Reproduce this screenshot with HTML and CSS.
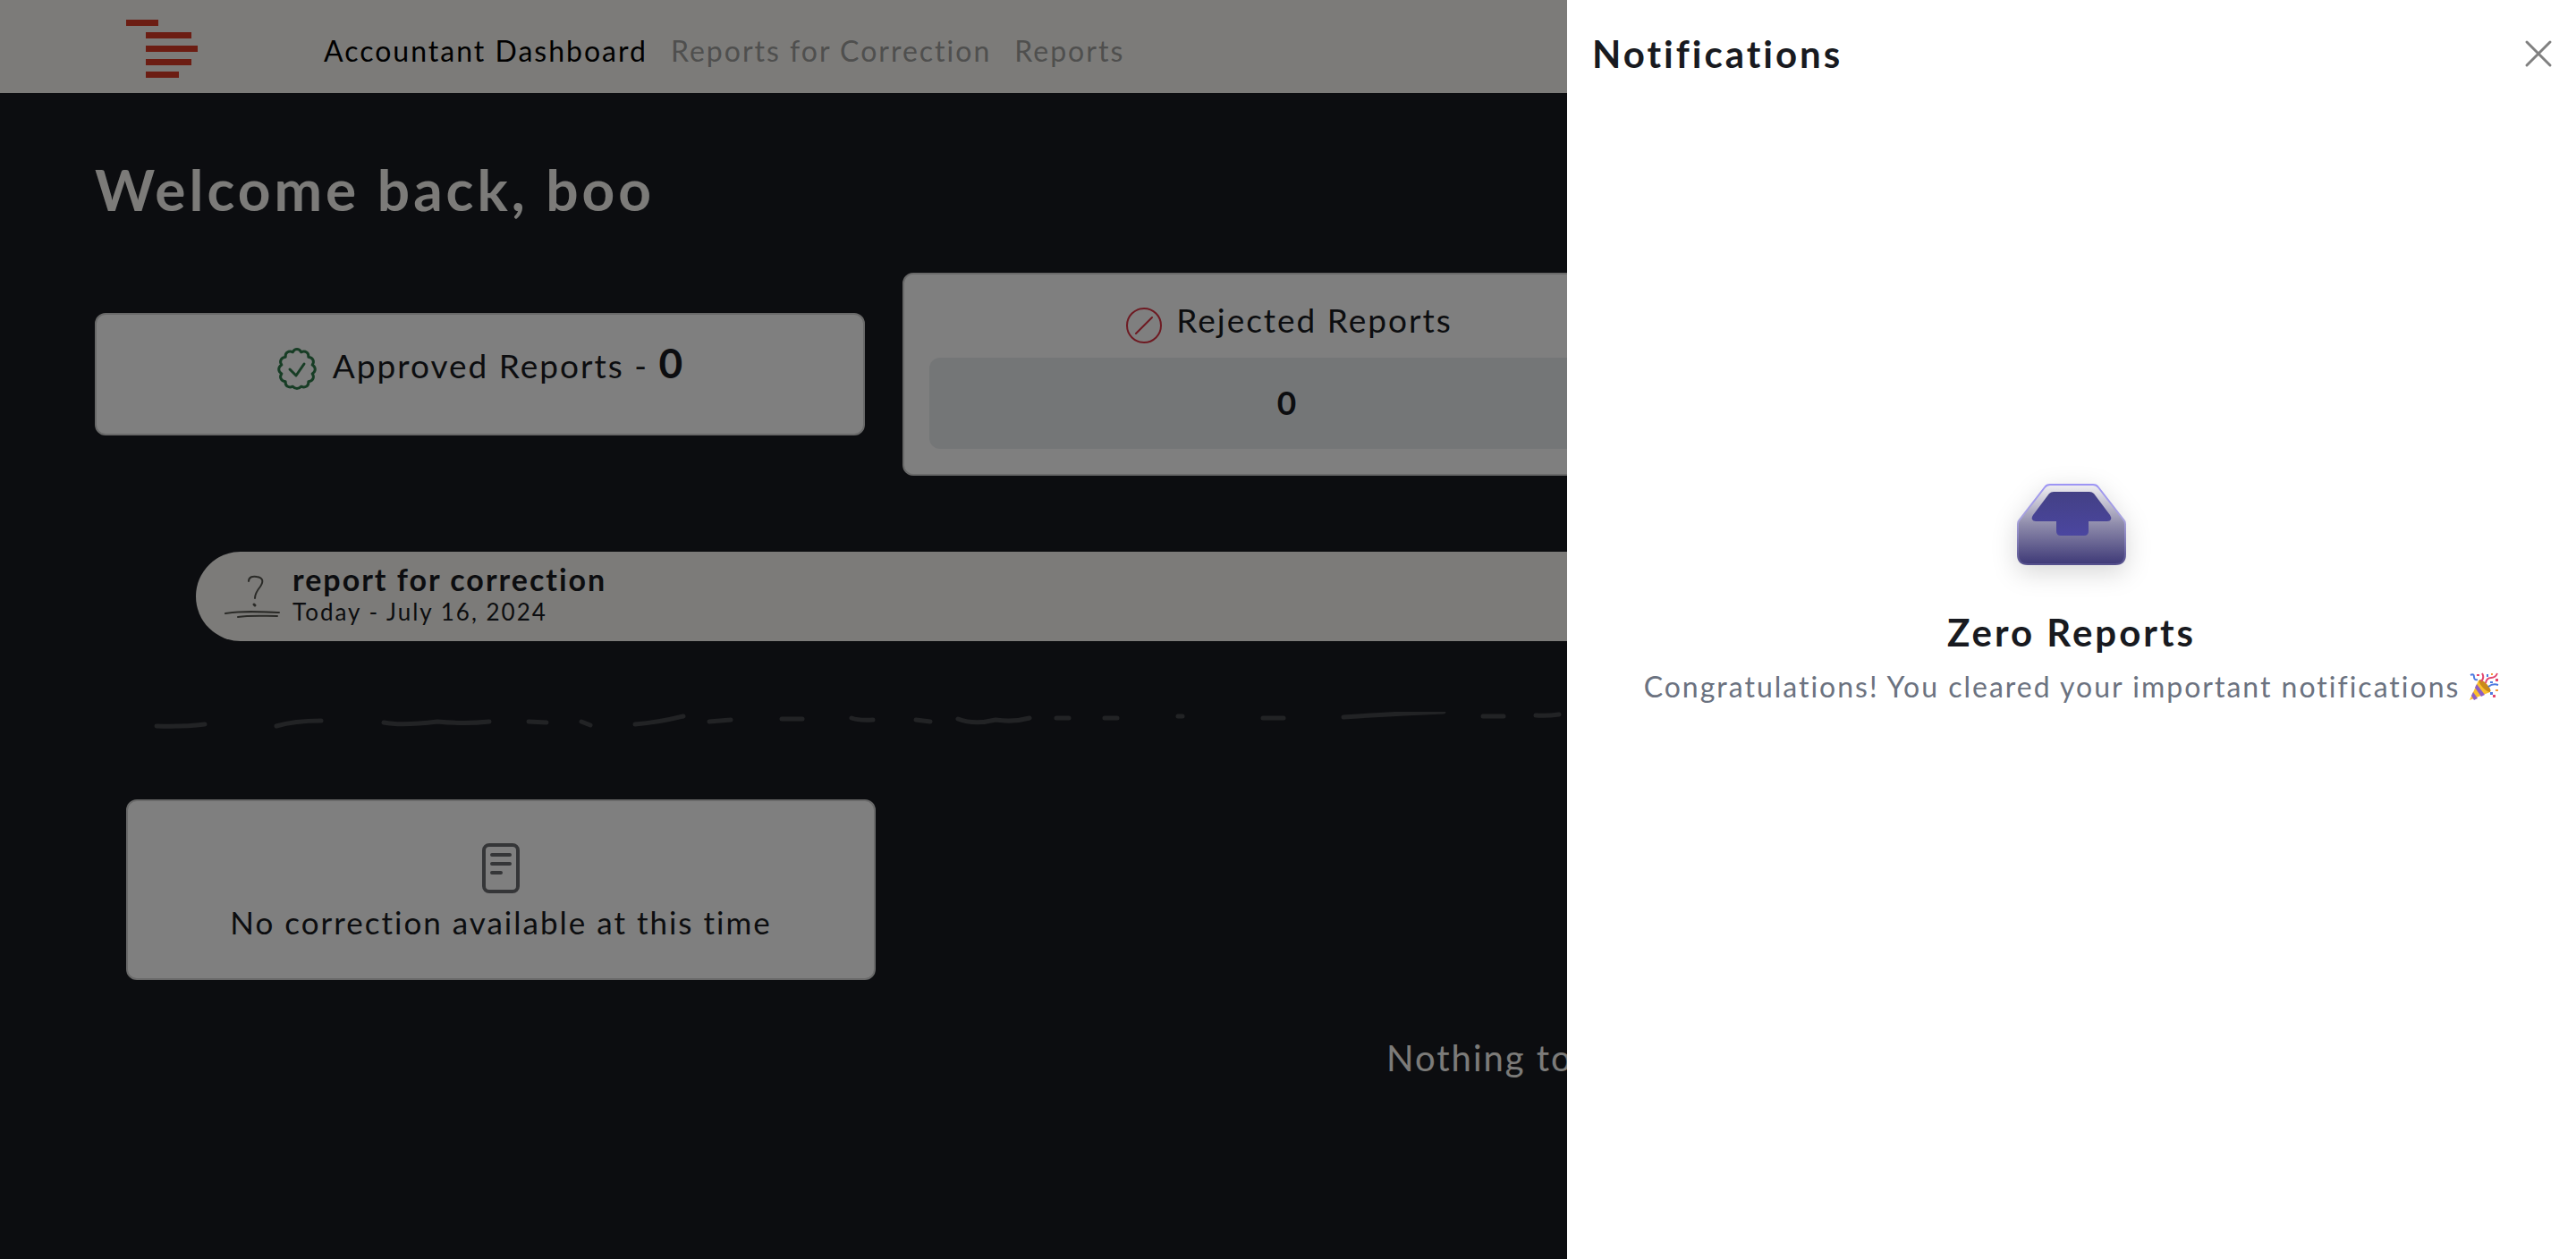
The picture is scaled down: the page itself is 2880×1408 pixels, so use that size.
FILE: index.html
```html
<!DOCTYPE html>
<html lang="en">
<head>
  <meta charset="utf-8">
  <meta name="viewport" content="width=device-width, initial-scale=1">
  <title>Accountant Dashboard</title>
  <link rel="stylesheet" href="styles.css">
</head>
<body>
  <header class="navbar">
    <a class="brand" href="#" aria-label="Home">
      <svg class="brand-logo" viewBox="0 0 80 66" aria-hidden="true">
        <path d="M0 0h36v7H0zM22 14h51v7H22zM22 29h58v7H22zM22 44h51v7H22zM22 58h37v7H22z"/>
      </svg>
    </a>
    <nav class="nav-links">
      <a class="nav-link active" href="#">Accountant Dashboard</a>
      <a class="nav-link" href="#">Reports for Correction</a>
      <a class="nav-link" href="#">Reports</a>
    </nav>
  </header>

  <main class="page">
    <h1 class="welcome">Welcome back, boo</h1>

    <section class="stats">
      <article class="card approved">
        <svg class="stat-icon green" viewBox="0 0 48 48" aria-hidden="true">
          <path d="M24 2.500q3 0 4.700 3.300 3.500-1.700 6.200.3 2.300 1.600 1.900 5.100 3.800.3 5.200 3.400 1.200 2.600-.9 5.500 3.200 2 3.200 4.900t-3.200 4.900q2.100 2.900.9 5.500-1.400 3.100-5.200 3.400.4 3.500-1.900 5.100-2.700 2-6.200.3Q27 46.500 24 46.500t-4.700-2.300q-3.500 1.700-6.200-.3-2.300-1.600-1.900-5.100-3.800-.3-5.200-3.400-1.200-2.600.9-5.500-3.200-2-3.200-4.900t3.200-4.900q-2.100-2.900-.9-5.500 1.400-3.100 5.200-3.400-.4-3.500 1.900-5.100 2.700-2 6.200-.3Q21 2.500 24 2.500z"/>
          <path d="M16 25l7 7 9-13"/>
        </svg>
        <span class="stat-label">Approved Reports - <strong class="stat-total">0</strong></span>
      </article>
      <article class="card rejected">
        <div class="stat-head">
          <svg class="stat-icon red" viewBox="0 0 48 48" aria-hidden="true">
            <circle cx="24" cy="24" r="19"/>
            <path d="M15 33l18-18"/>
          </svg>
          <span class="stat-label">Rejected Reports</span>
        </div>
        <div class="stat-box">0</div>
      </article>
    </section>

    <section class="report-pill">
      <svg class="sketch" viewBox="0 0 62 48" aria-hidden="true">
        <path d="M27 7c0-5 5-6 9-5 7 1 8 5 4 11-4 5-6 8-6 13"/>
        <path class="dot" d="M33 33l1 1"/>
        <path d="M1 43c18-3 38-2 60-1M15 47c14-2 28-1 44-1"/>
      </svg>
      <div class="report-text">
        <strong class="report-name">report for correction</strong>
        <span class="report-date">Today - July 16, 2024</span>
      </div>
    </section>

    <svg class="divider" viewBox="0 0 2536 24" aria-hidden="true">
      <path d="M4 16q30 1 54-2M138 16q20-6 50-6M258 12q20 4 60-1 30 3 58 0M420 11l20 1M479 11l10 4M539 14q26-2 54-9M622 11l24-2M703 8h23M781 7q8 3 24 2M853 9l16 2M900 8q18 7 42 1 20 3 38-2M1010 7h14M1064 7h14M1146 5h5M1241 7h23M1331 6q60-4 112-6M1487 5h23M1546 4q12 1 26-1"/>
    </svg>

    <section class="card empty-card">
      <svg class="doc-icon" viewBox="0 0 44 56" aria-hidden="true">
        <rect x="3" y="2" width="38" height="52" rx="6"/>
        <path d="M12 13h20M12 23h20M12 33h10"/>
      </svg>
      <p class="empty-text">No correction available at this time</p>
    </section>

    <p class="nothing">Nothing to show</p>
  </main>

  <div class="backdrop"></div>

  <aside class="drawer" role="dialog" aria-labelledby="drawer-title">
    <header class="drawer-header">
      <h2 class="drawer-title" id="drawer-title">Notifications</h2>
      <button class="close" type="button" aria-label="Close">
        <svg viewBox="0 0 32 32" aria-hidden="true"><path d="M3 3l26 26M29 3L3 29"/></svg>
      </button>
    </header>
    <div class="drawer-body">
      <svg class="inbox" viewBox="0 0 122 91" aria-hidden="true">
        <defs>
          <linearGradient id="tray" x1="0" y1="0" x2="0" y2="1">
            <stop offset="0" stop-color="#f1f0f2"/>
            <stop offset=".5" stop-color="#8e8bab"/>
            <stop offset="1" stop-color="#3e3977"/>
          </linearGradient>
          <linearGradient id="edge" x1="0" y1="0" x2="0" y2="1">
            <stop offset="0" stop-color="#9d95f4"/>
            <stop offset=".45" stop-color="#a8a3dc"/>
            <stop offset="1" stop-color="#55508c"/>
          </linearGradient>
          <linearGradient id="slot" x1="0" y1="0" x2="0" y2="1">
            <stop offset="0" stop-color="#434085"/>
            <stop offset="1" stop-color="#4b46a0"/>
          </linearGradient>
        </defs>
        <path fill="url(#tray)" stroke="url(#edge)" stroke-width="2" d="M37 1h48q4 0 6 3l28 36q2 2 2 5v34q0 11-11 11H12Q1 90 1 79V45q0-3 2-5L31 4q2-3 6-3z"/>
        <path fill="url(#slot)" d="M41 9h40q3 0 5 2l18 24q2 3 1 5t-4 2H80v11q0 5-5 5H49q-5 0-5-5V42H21q-3 0-4-2t1-5l18-24q2-2 5-2z"/>
      </svg>
      <h3 class="drawer-heading">Zero Reports</h3>
      <p class="drawer-note">
        <span>Congratulations! You cleared your important notifications</span>
        <svg class="popper" viewBox="0 0 34 32" role="img" aria-label="party popper">
          <path fill="#fbc02d" d="M1 31L11 9q9 3 13 13z"/>
          <path fill="#8d5fc4" d="M9 13l9 12-4 2-7-10zM5 22l5 7-4 2-3-5z"/>
          <ellipse cx="18" cy="15" rx="3" ry="9" transform="rotate(-43 18 15)" fill="#c98a1a"/>
          <path fill="none" stroke="#4f7be0" stroke-width="2" d="M2 3q4-2 4 2t4 3M22 16q5-4 11-2"/>
          <path fill="none" stroke="#e2476f" stroke-width="2" d="M14 10q4-4 1-9M19 12q1-6 6-6t7-5"/>
          <path fill="#e2476f" d="M30 7h3v3h-3zM27 25h3v3h-3zM9 2h3v2H9z"/>
          <path fill="#4f7be0" d="M24 10h3v2h-3zM24 22h3v3h-3zM20 2h2v3h-2z"/>
          <path fill="#f39a3d" d="M30 19h3v2h-3zM25 1h2v2h-2z"/>
        </svg>
      </p>
    </div>
  </aside>
</body>
</html>
```
FILE: styles.css
```css
* {
  box-sizing: border-box;
}

body {
  margin: 0;
  min-height: 100vh;
  background: #181a20;
  color: #181a20;
  font-family: Lato, "Open Sans", sans-serif;
  font-size: 32px;
  font-weight: 400;
  letter-spacing: 2px;
  overflow: hidden;
}

h1,
h2,
h3,
p {
  margin: 0;
}

svg {
  flex: none;
}

.navbar {
  display: flex;
  align-items: center;
  height: 104px;
  padding: 0 141px;
  background: #f8f7f3;
}

.brand {
  display: flex;
  margin-right: 141px;
}

.brand-logo {
  width: 80px;
  height: 66px;
  margin-top: 6px;
  fill: #d83a26;
}

.nav-links {
  display: flex;
  gap: 26px;
  margin-top: 10px;
}

.nav-link {
  color: #9e9e9c;
  line-height: 40px;
  text-decoration: none;
}

.nav-link.active {
  color: #000;
}

.page {
  padding: 64px 106px 0;
}

.welcome {
  color: #f8f7f3;
  font-size: 64px;
  font-weight: 700;
  letter-spacing: 4px;
  line-height: 88px;
}

.stats {
  display: flex;
  align-items: center;
  gap: 42px;
  margin-top: 49px;
}

.card {
  background: #fff;
  border: 2px solid #d2d2d2;
  border-radius: 12px;
}

.approved,
.rejected {
  flex: 0 0 861px;
}

.approved {
  display: flex;
  justify-content: center;
  gap: 16px;
  height: 137px;
  padding-top: 28px;
}

.rejected {
  padding: 25px 28px 28px;
}

.stat-head {
  display: flex;
  justify-content: center;
  gap: 12px;
  height: 68px;
}

.stat-icon {
  width: 48px;
  height: 48px;
  margin-top: 8px;
  fill: none;
  stroke-width: 2;
  stroke-linecap: round;
  stroke-linejoin: round;
}

.green {
  stroke: #2f7a4a;
  stroke-width: 3;
}

.red {
  stroke: #dc3545;
}

.stat-label {
  font-size: 37px;
  line-height: 52px;
}

.stat-total {
  font-size: 46px;
  font-weight: 700;
}

.stat-box {
  padding: 23px 24px 25px;
  border-radius: 12px;
  background: #e9ecef;
  font-size: 37px;
  font-weight: 700;
  line-height: 54px;
  text-align: center;
}

.report-pill {
  display: flex;
  align-items: center;
  gap: 14px;
  height: 100px;
  margin: 85px 113px 0;
  padding: 0 32px;
  border-radius: 50px;
  background: #f8f7f3;
}

.sketch {
  width: 62px;
  height: 48px;
  fill: none;
  stroke: #55554f;
  stroke-width: 2;
  stroke-linecap: round;
}

.sketch .dot {
  stroke-width: 3;
}

.report-text {
  display: flex;
  flex-direction: column;
  padding-bottom: 4px;
}

.report-name {
  font-size: 34px;
  font-weight: 700;
  line-height: 38px;
}

.report-date {
  font-size: 26px;
  line-height: 34px;
}

.divider {
  display: block;
  width: calc(100% - 132px);
  margin: 79px 0 0 65px;
  fill: none;
  stroke: #45464b;
  stroke-width: 5;
  stroke-linecap: round;
}

.empty-card {
  display: flex;
  flex-direction: column;
  align-items: center;
  width: 838px;
  margin: 74px 0 0 35px;
  padding: 47px 28px 36px;
}

.doc-icon {
  width: 44px;
  height: 56px;
  fill: none;
  stroke: #6b6c70;
  stroke-width: 4;
  stroke-linecap: round;
}

.empty-text {
  margin-top: 5px;
  font-size: 35px;
  line-height: 54px;
}

.nothing {
  margin: 59px 0 0 1444px;
  color: #f8f7f3;
  font-size: 40px;
  line-height: 56px;
}

.backdrop {
  position: fixed;
  inset: 0;
  background: rgba(0, 0, 0, 0.5);
}

.drawer {
  position: fixed;
  inset: 0 0 0 auto;
  display: flex;
  flex-direction: column;
  width: 1128px;
  max-width: 100%;
  background: #fff;
}

.drawer-header {
  display: flex;
  align-items: center;
  justify-content: space-between;
  height: 120px;
  padding: 0 26px 0 28px;
}

.drawer-title,
.drawer-heading {
  font-size: 42px;
  font-weight: 700;
  letter-spacing: 3px;
  line-height: 56px;
}

.close {
  display: flex;
  padding: 0;
  border: 0;
  background: none;
}

.close svg {
  width: 32px;
  height: 32px;
  fill: none;
  stroke: #808080;
  stroke-width: 3;
  stroke-linecap: round;
}

.drawer-body {
  display: flex;
  flex: 1;
  flex-direction: column;
  align-items: center;
  padding-top: 421px;
}

.inbox {
  width: 122px;
  height: 91px;
  filter: drop-shadow(0 8px 14px rgba(0, 0, 0, 0.16));
}

.drawer-heading {
  margin-top: 47px;
}

.drawer-note {
  display: flex;
  align-items: center;
  gap: 10px;
  margin-top: 13px;
  color: #6b7280;
  line-height: 40px;
}

.popper {
  width: 34px;
  height: 32px;
}
```
